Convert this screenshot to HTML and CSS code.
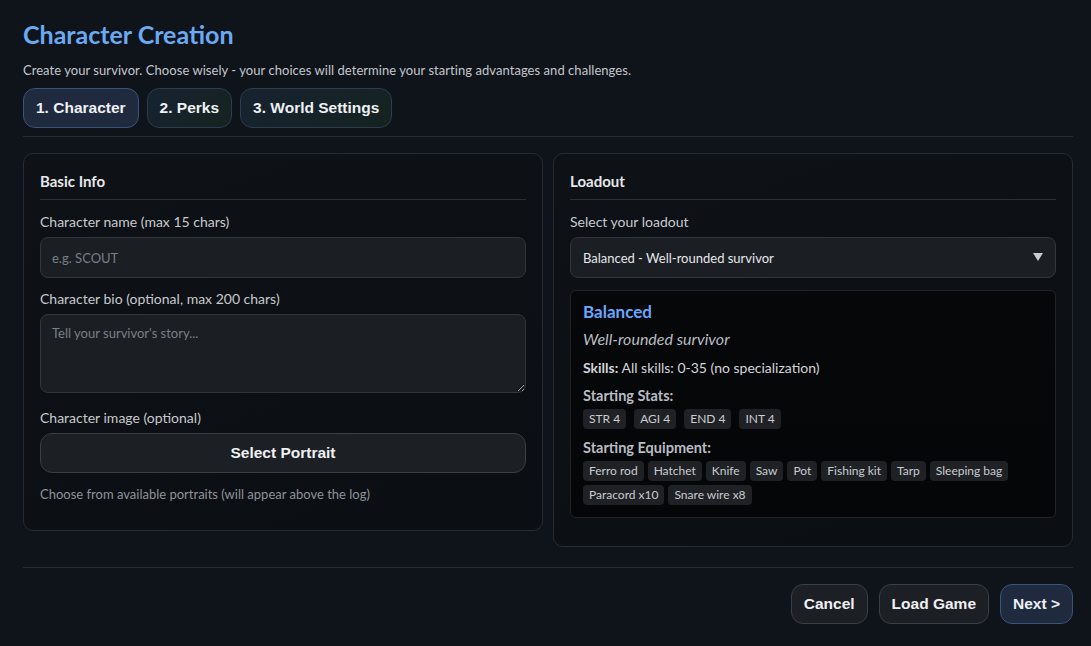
FILE: index.html
```html
<!DOCTYPE html>
<html lang="en">

<head>
    <meta charset="UTF-8">
    <meta name="viewport" content="width=device-width, initial-scale=1.0">
    <title>Character Creation</title>
    <link rel="stylesheet" href="styles.css">
</head>

<body>

    <div class="container">
        <h1>Character Creation</h1>
        <p class="intro">Create your survivor. Choose wisely - your choices will determine your starting advantages and challenges.</p>

        <!-- Step tabs -->
        <div class="tabs">
            <button class="tab active">1. Character</button>
            <button class="tab">2. Perks</button>
            <button class="tab">3. World Settings</button>
        </div>

        <div class="panels">
            <!-- Basic info -->
            <div class="panel left">
                <h3>Basic Info</h3>
                <label for="charName">Character name (max 15 chars)</label>
                <input type="text" id="charName" maxlength="15" placeholder="e.g. SCOUT">

                <label for="charBio">Character bio (optional, max 200 chars)</label>
                <textarea id="charBio" maxlength="200" placeholder="Tell your survivor's story..."></textarea>

                <label>Character image (optional)</label>
                <button class="btn wide">Select Portrait</button>
                <p class="hint">Choose from available portraits (will appear above the log)</p>
            </div>

            <!-- Loadout -->
            <div class="panel right">
                <h3>Loadout</h3>
                <label for="loadout">Select your loadout</label>
                <div class="select-wrap">
                    <select id="loadout">
                        <option>Balanced - Well-rounded survivor</option>
                    </select>
                </div>

                <div class="loadout-info">
                    <div class="loadout-name">Balanced</div>
                    <div class="loadout-desc">Well-rounded survivor</div>
                    <div class="loadout-skills"><b>Skills:</b> All skills: 0-35 (no specialization)</div>

                    <div class="sub-title">Starting Stats:</div>
                    <div class="chips stats">
                        <span class="chip">STR 4</span>
                        <span class="chip">AGI 4</span>
                        <span class="chip">END 4</span>
                        <span class="chip">INT 4</span>
                    </div>

                    <div class="sub-title">Starting Equipment:</div>
                    <div class="chips">
                        <span class="chip">Ferro rod</span>
                        <span class="chip">Hatchet</span>
                        <span class="chip">Knife</span>
                        <span class="chip">Saw</span>
                        <span class="chip">Pot</span>
                        <span class="chip">Fishing kit</span>
                        <span class="chip">Tarp</span>
                        <span class="chip">Sleeping bag</span>
                        <span class="chip">Paracord x10</span>
                        <span class="chip">Snare wire x8</span>
                    </div>
                </div>
            </div>
        </div>

        <div class="footer">
            <button class="btn">Cancel</button>
            <button class="btn">Load Game</button>
            <button class="btn primary">Next &gt;</button>
        </div>
    </div>

</body>

</html>
```

FILE: styles.css
```css
body {
    font-family: 'Lato', 'Noto Sans', sans-serif;
    background-color: #0f131a;
    color: #d6d9de;
    margin: 0;
    padding: 0;
}

.container {
    padding: 19px 18px 20px 23px;
}

h1 {
    color: #6aaaf2;
    font-size: 25px;
    line-height: 30px;
    font-weight: bold;
    margin: 0 0 12px 0;
}

.intro {
    font-size: 13px;
    line-height: 18px;
    letter-spacing: 0.05px;
    color: #c3c7cd;
    margin: 0 0 9px 0;
}

.tabs {
    display: flex;
    gap: 8px;
    padding-bottom: 8px;
    border-bottom: 1px solid #262b33;
}

button {
    font-family: 'Liberation Sans', Arial, sans-serif;
    font-weight: bold;
    font-size: 15.5px;
    color: #eef0f3;
    cursor: pointer;
}

.tab {
    height: 40px;
    padding: 0 12px;
    border: 1px solid #2c3b50;
    border-radius: 12px;
    background: linear-gradient(135deg, #172230, #142320);
}

.tab.active {
    background: #1f2a3e;
    border-color: #3a5378;
}

.panels {
    display: flex;
    gap: 10px;
    align-items: flex-start;
    margin-top: 16px;
    padding-bottom: 20px;
    border-bottom: 1px solid #262b33;
}

.panel {
    flex: 1;
    background: linear-gradient(160deg, #0e1116, #0b0e12);
    border: 1px solid #262a31;
    border-radius: 10px;
    padding: 18px 16px 28px 16px;
}

h3 {
    font-size: 15px;
    line-height: 18px;
    color: #e6e8eb;
    margin: 0 0 13px 0;
    padding: 0 0 9px 0;
    border-bottom: 1px solid #2a2e35;
}

label {
    font-size: 14px;
    line-height: 18px;
    color: #c7cace;
    display: block;
    margin-bottom: 6px;
}

input[type="text"],
textarea,
select {
    width: 100%;
    box-sizing: border-box;
    background-color: #1b1e23;
    border: 1px solid #31353c;
    border-radius: 8px;
    color: #e6e8eb;
    font-family: 'Lato', 'Noto Sans', sans-serif;
    font-size: 13px;
    margin: 0 0 12px 0;
}

input[type="text"] {
    height: 41px;
    padding: 0 11px;
    display: block;
}

textarea {
    height: 79px;
    padding: 10px 11px;
    resize: vertical;
    display: block;
    margin-top: 1px;
    margin-bottom: 16px;
}

input::placeholder,
textarea::placeholder {
    color: #7a7f87;
}

.select-wrap {
    position: relative;
}

.select-wrap::after {
    content: "";
    position: absolute;
    right: 13px;
    top: 16px;
    border-left: 5px solid transparent;
    border-right: 5px solid transparent;
    border-top: 8px solid #c9ccd1;
}

select {
    height: 41px;
    padding: 0 12px;
    appearance: none;
    display: block;
    margin-bottom: 12px;
}

.btn {
    height: 40px;
    padding: 0 12px;
    background-color: #1c1f23;
    border: 1px solid #3a3e45;
    border-radius: 12px;
}

.btn.wide {
    width: 100%;
    display: block;
}

.btn.primary {
    background-color: #1f2a3e;
    border-color: #3a5378;
}

.hint {
    font-size: 13px;
    line-height: 16px;
    color: #8e939a;
    margin: 13px 0 0 0;
}

.loadout-info {
    background: linear-gradient(180deg, #060709, #050608);
    border: 1px solid #202329;
    border-radius: 6px;
    padding: 11px 12px 12px 12px;
}

.loadout-name {
    color: #6aa6ff;
    font-size: 17px;
    line-height: 20px;
    font-weight: bold;
}

.loadout-desc {
    color: #b8bcc2;
    font-style: italic;
    font-size: 16px;
    line-height: 20px;
    margin-top: 7px;
}

.loadout-skills {
    font-size: 14px;
    line-height: 18px;
    color: #d2d5da;
    margin-top: 10px;
}

.sub-title {
    font-size: 14.5px;
    line-height: 18px;
    font-weight: bold;
    color: #b9bdc3;
    margin-top: 10px;
    margin-bottom: 4px;
}

.chips {
    display: flex;
    flex-wrap: wrap;
    gap: 4px;
}

.chips.stats {
    gap: 8px;
}

.chip {
    font-size: 12px;
    line-height: 16px;
    color: #c9ccd1;
    background-color: #1f2125;
    border-radius: 4px;
    padding: 2px 6px;
}

.footer {
    display: flex;
    justify-content: flex-end;
    gap: 11px;
    margin-top: 16px;
}
```
